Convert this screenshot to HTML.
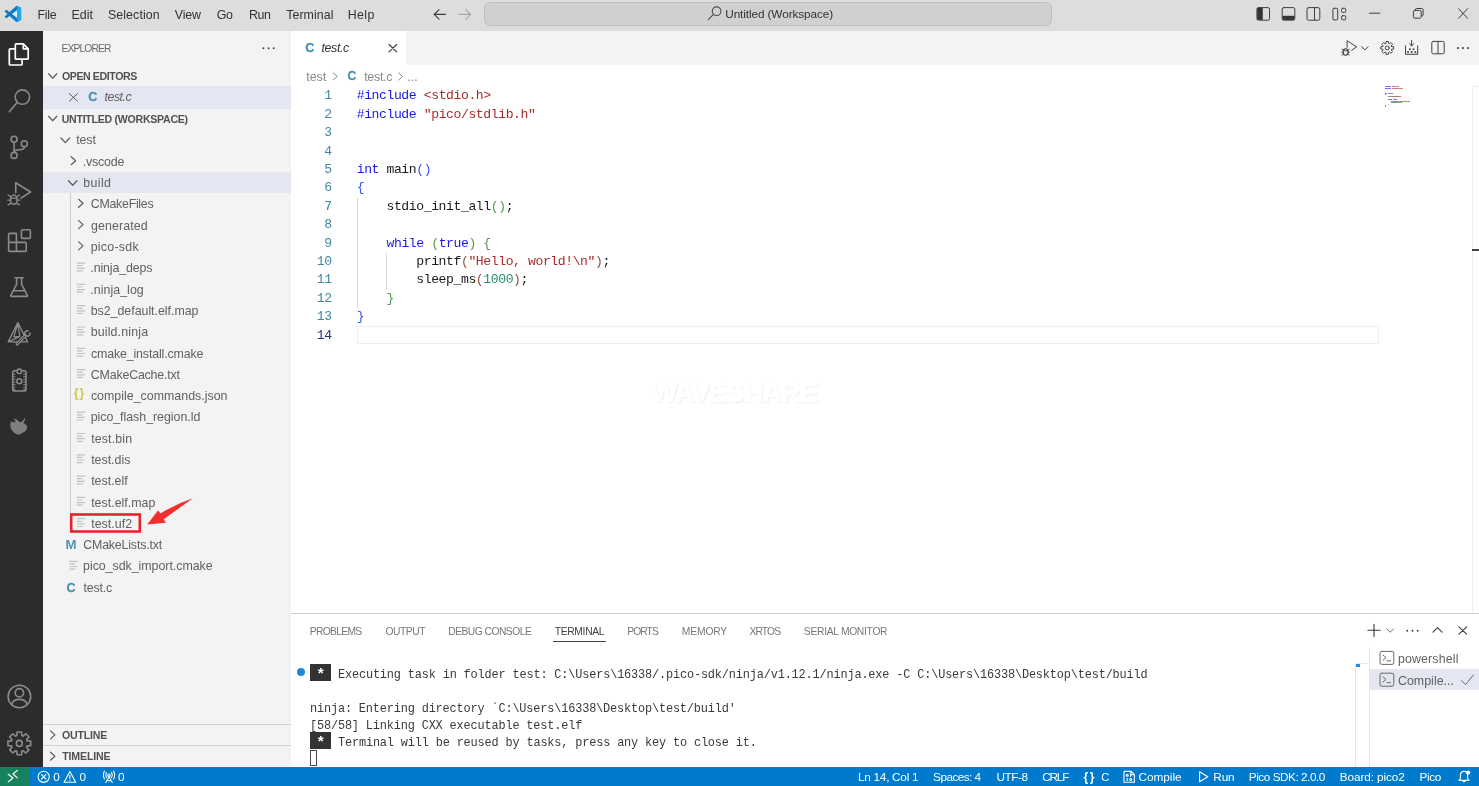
<!DOCTYPE html>
<html lang="en"><head><meta charset="utf-8"><title>Untitled (Workspace) - Visual Studio Code</title>
<style>
*{box-sizing:border-box}
html,body{margin:0;padding:0}
body{width:1479px;height:786px;overflow:hidden;background:#fff;position:relative;font-family:'Liberation Sans',sans-serif;-webkit-font-smoothing:antialiased}
.b{position:absolute}
.t{position:absolute;white-space:pre;line-height:20px;height:20px}
#w{position:absolute;left:0;top:0;width:1479px;height:786px;will-change:transform}
.cl{position:absolute;left:356.7px;white-space:pre;font-family:'Liberation Mono',monospace;font-size:13.1px;letter-spacing:-0.41px;line-height:18.4px;height:18.4px;color:#1a1a1a}
.ln{position:absolute;left:291px;width:40.6px;text-align:right;white-space:pre;font-family:'Liberation Mono',monospace;font-size:13.1px;letter-spacing:-0.41px;line-height:18.4px;height:18.4px;color:#3f889f}
.tl{position:absolute;left:310px;white-space:pre;font-family:'Liberation Mono',monospace;font-size:11.9px;letter-spacing:-0.157px;line-height:17px;height:17px;color:#3a3a3a}
.k{color:#1818ee}.s{color:#a82a2a}.n{color:#23926a}.b1{color:#3357f0}.b2{color:#4f9d4f}.b3{color:#8c553a}
svg{position:absolute;overflow:visible}
</style></head>
<body>
<div id="w">
<div class="b" style="left:0;top:0;width:1479px;height:31px;background:#dddddd"></div>
<div class="b" style="left:484.1px;top:2px;width:567.5px;height:23.5px;background:#d0d0d0;border:1px solid #bfbfbf;border-radius:6px"></div>
<div class="b" style="left:42px;top:31px;width:249px;height:736px;background:#f3f3f3"></div>
<div class="b" style="left:0;top:31px;width:42.6px;height:736px;background:#2c2c2c"></div>
<div class="b" style="left:291px;top:31px;width:1188px;height:34px;background:#f3f3f3"></div>
<div class="b" style="left:291px;top:31px;width:115.3px;height:34px;background:#ffffff"></div>
<div class="b" style="left:43px;top:86.3px;width:248px;height:22.3px;background:#e4e6f1"></div>
<div class="b" style="left:43px;top:171.7px;width:248px;height:21.2px;background:#e4e6f1"></div>
<div class="b" style="left:69.6px;top:193px;width:1px;height:320px;background:#cacaca"></div>
<div class="b" style="left:43px;top:724px;width:248px;height:1px;background:#d2d2d2"></div>
<div class="b" style="left:43px;top:745.2px;width:248px;height:1px;background:#d2d2d2"></div>
<div class="b" style="left:357px;top:326.2px;width:1022px;height:17.4px;border:1px solid #eeeeee"></div>
<div class="b" style="left:357px;top:197.7px;width:1px;height:110.4px;background:#d8d8d8"></div>
<div class="b" style="left:386.4px;top:252.9px;width:1px;height:36.8px;background:#d8d8d8"></div>
<div class="b" style="left:1472px;top:86px;width:7px;height:527px;border-left:1px solid #ececec;border-top:1px solid #ececec"></div>
<div class="b" style="left:1472px;top:249.3px;width:7px;height:1.6px;background:#444"></div>
<div class="b" style="left:291px;top:613px;width:1188px;height:1px;background:#cfcfcf"></div>
<div class="b" style="left:553.3px;top:641.3px;width:52.6px;height:1px;background:#424242"></div>
<div class="b" style="left:1369.3px;top:647px;width:1px;height:120px;background:#e5e5e5"></div>
<div class="b" style="left:1355.4px;top:663.4px;width:14px;height:104px;border-left:1px solid #e8e8e8;border-top:1px solid #e8e8e8"></div>
<div class="b" style="left:1356px;top:664px;width:4px;height:2.6px;background:#2a8ad6"></div>
<div class="b" style="left:1370px;top:669.2px;width:109px;height:20.5px;background:#e4e6f1"></div>
<div class="b" style="left:297.4px;top:667.9px;width:8px;height:8px;border-radius:50%;background:#1e8ad6"></div>
<div class="b" style="left:310px;top:749.6px;width:7px;height:16.6px;border:1px solid #4a4a4a"></div>
<div class="b" style="left:0;top:767px;width:1479px;height:19px;background:#007acc"></div>
<div class="b" style="left:0;top:767px;width:29.8px;height:19px;background:#16825d"></div>
<div class="b" style="left:651.3px;top:375.2px;font-size:27.6px;font-weight:700;line-height:36px;color:#ffffff;letter-spacing:-1.1px;-webkit-text-stroke:0.7px #fff;text-shadow:1px 1px 1.5px rgba(0,0,0,0.09)">WAVESHARE</div>
<div class="ln" style="top:87.30px">1</div>
<div class="cl" style="top:87.30px"><span class="k">#include</span> <span class="s">&lt;stdio.h&gt;</span></div>
<div class="ln" style="top:105.70px">2</div>
<div class="cl" style="top:105.70px"><span class="k">#include</span> <span class="s">"pico/stdlib.h"</span></div>
<div class="ln" style="top:124.10px">3</div>
<div class="ln" style="top:142.50px">4</div>
<div class="ln" style="top:160.90px">5</div>
<div class="cl" style="top:160.90px"><span class="k">int</span> main<span class="b1">()</span></div>
<div class="ln" style="top:179.30px">6</div>
<div class="cl" style="top:179.30px"><span class="b1">{</span></div>
<div class="ln" style="top:197.70px">7</div>
<div class="cl" style="top:197.70px">    stdio_init_all<span class="b2">()</span>;</div>
<div class="ln" style="top:216.10px">8</div>
<div class="ln" style="top:234.50px">9</div>
<div class="cl" style="top:234.50px">    <span class="k">while</span> <span class="b2">(</span><span class="k">true</span><span class="b2">)</span> <span class="b2">{</span></div>
<div class="ln" style="top:252.90px">10</div>
<div class="cl" style="top:252.90px">        printf<span class="b3">(</span><span class="s">"Hello, world!\n"</span><span class="b3">)</span>;</div>
<div class="ln" style="top:271.30px">11</div>
<div class="cl" style="top:271.30px">        sleep_ms<span class="b3">(</span><span class="n">1000</span><span class="b3">)</span>;</div>
<div class="ln" style="top:289.70px">12</div>
<div class="cl" style="top:289.70px">    <span class="b2">}</span></div>
<div class="ln" style="top:308.10px">13</div>
<div class="cl" style="top:308.10px"><span class="b1">}</span></div>
<div class="ln" style="top:326.50px;color:#22357c">14</div>
<div class="tl" style="top:666.70px;left:338.0px">Executing task in folder test: C:\Users\16338/.pico-sdk/ninja/v1.12.1/ninja.exe -C C:\Users\16338\Desktop\test/build </div>
<div class="tl" style="top:700.80px;left:310.0px">ninja: Entering directory `C:\Users\16338\Desktop\test/build&#x27;</div>
<div class="tl" style="top:717.85px;left:310.0px">[58/58] Linking CXX executable test.elf</div>
<div class="tl" style="top:734.90px;left:338.0px">Terminal will be reused by tasks, press any key to close it. </div>
<div class="b" style="left:310px;top:664.00px;width:21px;height:17px;background:#333"></div>
<div class="tl" style="top:666.60px;left:316.3px;color:#fff;font-weight:700;font-size:15px">*</div>
<div class="b" style="left:310px;top:732.00px;width:21px;height:17px;background:#333"></div>
<div class="tl" style="top:734.60px;left:316.3px;color:#fff;font-weight:700;font-size:15px">*</div>
<div class="b" style="left:1385.00px;top:86.20px;width:6.08px;height:1.3px;background:#0000ff;opacity:.55"></div>
<div class="b" style="left:1391.84px;top:86.20px;width:6.84px;height:1.3px;background:#a31515;opacity:.55"></div>
<div class="b" style="left:1385.00px;top:87.80px;width:6.08px;height:1.3px;background:#0000ff;opacity:.55"></div>
<div class="b" style="left:1391.84px;top:87.80px;width:11.40px;height:1.3px;background:#a31515;opacity:.55"></div>
<div class="b" style="left:1385.00px;top:92.60px;width:2.28px;height:1.3px;background:#0000ff;opacity:.55"></div>
<div class="b" style="left:1388.04px;top:92.60px;width:4.56px;height:1.3px;background:#333;opacity:.55"></div>
<div class="b" style="left:1385.00px;top:94.20px;width:0.76px;height:1.3px;background:#0431fa;opacity:.55"></div>
<div class="b" style="left:1388.04px;top:95.80px;width:12.92px;height:1.3px;background:#333;opacity:.55"></div>
<div class="b" style="left:1388.04px;top:99.00px;width:3.80px;height:1.3px;background:#0000ff;opacity:.55"></div>
<div class="b" style="left:1392.60px;top:99.00px;width:4.56px;height:1.3px;background:#0000ff;opacity:.55"></div>
<div class="b" style="left:1391.08px;top:100.60px;width:5.32px;height:1.3px;background:#333;opacity:.55"></div>
<div class="b" style="left:1396.40px;top:100.60px;width:12.16px;height:1.3px;background:#a31515;opacity:.55"></div>
<div class="b" style="left:1408.56px;top:100.60px;width:1.52px;height:1.3px;background:#333;opacity:.55"></div>
<div class="b" style="left:1391.08px;top:102.20px;width:6.84px;height:1.3px;background:#333;opacity:.55"></div>
<div class="b" style="left:1397.92px;top:102.20px;width:3.04px;height:1.3px;background:#098658;opacity:.55"></div>
<div class="b" style="left:1400.96px;top:102.20px;width:1.52px;height:1.3px;background:#333;opacity:.55"></div>
<div class="b" style="left:1388.04px;top:103.80px;width:0.76px;height:1.3px;background:#319331;opacity:.55"></div>
<div class="b" style="left:1385.00px;top:105.40px;width:0.76px;height:1.3px;background:#0431fa;opacity:.55"></div>
<span class="t" style="left:305.2px;top:38.1px;font-size:12.6px;font-weight:700;color:#4a91b2;-webkit-text-stroke:0.3px #4a91b2">C</span>
<span class="t" style="left:347.5px;top:66.3px;font-size:12.2px;font-weight:700;color:#4a91b2;-webkit-text-stroke:0.3px #4a91b2">C</span>
<span class="t" style="left:88.2px;top:86.8px;font-size:12.6px;font-weight:700;color:#4a91b2;-webkit-text-stroke:0.3px #4a91b2">C</span>
<span class="t" style="left:66.6px;top:577.6px;font-size:12.6px;font-weight:700;color:#4a91b2;-webkit-text-stroke:0.3px #4a91b2">C</span>
<span class="t" style="left:65.4px;top:534.6px;font-size:13.2px;font-weight:700;color:#4c93b5">M</span>
<span class="t" style="left:73.7px;top:383.4px;font-size:12.4px;font-weight:700;color:#c9c948;letter-spacing:0.9px">{}</span>
<span class="t" style="left:37.52px;top:5.00px;font-size:12.4px;color:#333333;letter-spacing:-0.248px;">File</span>
<span class="t" style="left:71.62px;top:5.00px;font-size:12.4px;color:#333333;letter-spacing:-0.032px;">Edit</span>
<span class="t" style="left:107.92px;top:5.00px;font-size:12.4px;color:#333333;letter-spacing:0.096px;">Selection</span>
<span class="t" style="left:174.86px;top:5.00px;font-size:12.4px;color:#333333;letter-spacing:-0.153px;">View</span>
<span class="t" style="left:216.63px;top:5.00px;font-size:12.4px;color:#333333;letter-spacing:-0.145px;">Go</span>
<span class="t" style="left:249.12px;top:5.00px;font-size:12.4px;color:#333333;letter-spacing:-0.475px;">Run</span>
<span class="t" style="left:286.23px;top:5.00px;font-size:12.4px;color:#333333;letter-spacing:0.055px;">Terminal</span>
<span class="t" style="left:347.72px;top:5.00px;font-size:12.4px;color:#333333;letter-spacing:0.383px;">Help</span>
<span class="t" style="left:725.22px;top:4.00px;font-size:11.8px;color:#333333;letter-spacing:-0.105px;">Untitled (Workspace)</span>
<span class="t" style="left:61.56px;top:39.00px;font-size:10.3px;color:#6a6a6a;letter-spacing:-0.892px;">EXPLORER</span>
<span class="t" style="left:61.94px;top:66.00px;font-size:10.6px;color:#515151;letter-spacing:-0.41px;font-weight:700;">OPEN EDITORS</span>
<span class="t" style="left:104.47px;top:87.00px;font-size:12.4px;color:#616161;letter-spacing:-0.462px;font-style:italic;">test.c</span>
<span class="t" style="left:61.74px;top:109.00px;font-size:10.6px;color:#515151;letter-spacing:-0.275px;font-weight:700;">UNTITLED (WORKSPACE)</span>
<span class="t" style="left:76.16px;top:130.00px;font-size:12.4px;color:#616161;letter-spacing:-0.07px;">test</span>
<span class="t" style="left:82.76px;top:152.00px;font-size:12.4px;color:#616161;letter-spacing:-0.172px;">.vscode</span>
<span class="t" style="left:83.26px;top:173.00px;font-size:12.4px;color:#616161;letter-spacing:0.376px;">build</span>
<span class="t" style="left:90.83px;top:194.00px;font-size:12.4px;color:#616161;letter-spacing:-0.29px;">CMakeFiles</span>
<span class="t" style="left:90.94px;top:216.00px;font-size:12.4px;color:#616161;letter-spacing:0.124px;">generated</span>
<span class="t" style="left:90.66px;top:237.00px;font-size:12.4px;color:#616161;letter-spacing:0.264px;">pico-sdk</span>
<span class="t" style="left:90.36px;top:258.00px;font-size:12.4px;color:#616161;letter-spacing:-0.134px;">.ninja_deps</span>
<span class="t" style="left:90.36px;top:280.00px;font-size:12.4px;color:#616161;letter-spacing:0.035px;">.ninja_log</span>
<span class="t" style="left:90.66px;top:301.00px;font-size:12.4px;color:#616161;letter-spacing:-0.017px;">bs2_default.elf.map</span>
<span class="t" style="left:90.66px;top:322.00px;font-size:12.4px;color:#616161;letter-spacing:0.156px;">build.ninja</span>
<span class="t" style="left:90.91px;top:344.00px;font-size:12.4px;color:#616161;letter-spacing:-0.135px;">cmake_install.cmake</span>
<span class="t" style="left:90.83px;top:365.00px;font-size:12.4px;color:#616161;letter-spacing:-0.19px;">CMakeCache.txt</span>
<span class="t" style="left:90.91px;top:386.00px;font-size:12.4px;color:#616161;letter-spacing:0.009px;">compile_commands.json</span>
<span class="t" style="left:90.66px;top:407.00px;font-size:12.4px;color:#616161;letter-spacing:-0.031px;">pico_flash_region.ld</span>
<span class="t" style="left:91.16px;top:429.00px;font-size:12.4px;color:#616161;letter-spacing:0.132px;">test.bin</span>
<span class="t" style="left:91.16px;top:450.00px;font-size:12.4px;color:#616161;letter-spacing:-0.009px;">test.dis</span>
<span class="t" style="left:91.16px;top:471.00px;font-size:12.4px;color:#616161;letter-spacing:0.009px;">test.elf</span>
<span class="t" style="left:91.16px;top:493.00px;font-size:12.4px;color:#616161;letter-spacing:0.019px;">test.elf.map</span>
<span class="t" style="left:91.16px;top:514.00px;font-size:12.4px;color:#616161;letter-spacing:0.059px;">test.uf2</span>
<span class="t" style="left:83.23px;top:535.00px;font-size:12.4px;color:#616161;letter-spacing:-0.177px;">CMakeLists.txt</span>
<span class="t" style="left:83.07px;top:556.00px;font-size:12.4px;color:#616161;letter-spacing:-0.028px;">pico_sdk_import.cmake</span>
<span class="t" style="left:83.56px;top:578.00px;font-size:12.4px;color:#616161;letter-spacing:-0.187px;">test.c</span>
<span class="t" style="left:61.94px;top:725.00px;font-size:10.6px;color:#515151;letter-spacing:-0.202px;font-weight:700;">OUTLINE</span>
<span class="t" style="left:62.29px;top:746.00px;font-size:10.6px;color:#515151;letter-spacing:-0.171px;font-weight:700;">TIMELINE</span>
<span class="t" style="left:321.57px;top:38.00px;font-size:12.4px;color:#333333;letter-spacing:-0.402px;font-style:italic;">test.c</span>
<span class="t" style="left:306.16px;top:67.00px;font-size:12.4px;color:#8a8a8a;letter-spacing:0.063px;">test</span>
<span class="t" style="left:364.16px;top:67.00px;font-size:12.4px;color:#8a8a8a;letter-spacing:-0.247px;">test.c</span>
<span class="t" style="left:407.26px;top:67.00px;font-size:12.4px;color:#8a8a8a;letter-spacing:0.01px;">...</span>
<span class="t" style="left:309.86px;top:622.00px;font-size:10.3px;color:#777;letter-spacing:-0.71px;">PROBLEMS</span>
<span class="t" style="left:385.4px;top:622.00px;font-size:10.3px;color:#777;letter-spacing:-0.443px;">OUTPUT</span>
<span class="t" style="left:448.26px;top:622.00px;font-size:10.3px;color:#777;letter-spacing:-0.527px;">DEBUG CONSOLE</span>
<span class="t" style="left:554.68px;top:622.00px;font-size:10.3px;color:#424242;letter-spacing:-0.305px;">TERMINAL</span>
<span class="t" style="left:627.26px;top:622.00px;font-size:10.3px;color:#777;letter-spacing:-0.923px;">PORTS</span>
<span class="t" style="left:681.86px;top:622.00px;font-size:10.3px;color:#777;letter-spacing:-0.169px;">MEMORY</span>
<span class="t" style="left:749.5px;top:622.00px;font-size:10.3px;color:#777;letter-spacing:-0.88px;">XRTOS</span>
<span class="t" style="left:803.86px;top:622.00px;font-size:10.3px;color:#777;letter-spacing:-0.298px;">SERIAL MONITOR</span>
<span class="t" style="left:1397.96px;top:649.00px;font-size:12.4px;color:#616161;letter-spacing:0.134px;">powershell</span>
<span class="t" style="left:1397.93px;top:671.00px;font-size:12.4px;color:#616161;letter-spacing:0.031px;">Compile...</span>
<span class="t" style="left:53.3px;top:767.00px;font-size:11.8px;color:#ffffff;letter-spacing:0px;">0</span>
<span class="t" style="left:79.4px;top:767.00px;font-size:11.8px;color:#ffffff;letter-spacing:0px;">0</span>
<span class="t" style="left:117.9px;top:767.00px;font-size:11.8px;color:#ffffff;letter-spacing:0px;">0</span>
<span class="t" style="left:858.05px;top:767.00px;font-size:11.8px;color:#ffffff;letter-spacing:-0.286px;">Ln 14, Col 1</span>
<span class="t" style="left:933.09px;top:767.00px;font-size:11.8px;color:#ffffff;letter-spacing:-0.552px;">Spaces: 4</span>
<span class="t" style="left:996.42px;top:767.00px;font-size:11.8px;color:#ffffff;letter-spacing:-0.441px;">UTF-8</span>
<span class="t" style="left:1042.23px;top:767.00px;font-size:11.8px;color:#ffffff;letter-spacing:-1.2px;">CRLF</span>
<span class="t" style="left:1138.44px;top:767.00px;font-size:11.8px;color:#ffffff;letter-spacing:-0.019px;">Compile</span>
<span class="t" style="left:1213.35px;top:767.00px;font-size:11.8px;color:#ffffff;letter-spacing:-0.223px;">Run</span>
<span class="t" style="left:1248.85px;top:767.00px;font-size:11.8px;color:#ffffff;letter-spacing:-0.485px;">Pico SDK: 2.0.0</span>
<span class="t" style="left:1339.75px;top:767.00px;font-size:11.8px;color:#ffffff;letter-spacing:-0.11px;">Board: pico2</span>
<span class="t" style="left:1419.45px;top:767.00px;font-size:11.8px;color:#ffffff;letter-spacing:-0.36px;">Pico</span>
<span class="t" style="left:1083.41px;top:767.00px;font-size:12.2px;color:#ffffff;letter-spacing:1.665px;font-weight:700;">{}</span>
<span class="t" style="left:1101.27px;top:767.00px;font-size:11.2px;color:#ffffff;letter-spacing:0px;">C</span>
<svg width="1479" height="786" viewBox="0 0 1479 786" style="left:0;top:0" fill="none" stroke-linecap="round" stroke-linejoin="round">
<g transform="translate(4.8,5.8) scale(0.68)"><path d="M23.15 2.587L18.21.21a1.494 1.494 0 0 0-1.705.29l-9.46 8.63-4.12-3.128a.999.999 0 0 0-1.276.057L.327 7.261A1 1 0 0 0 .326 8.74L3.899 12 .326 15.26a1 1 0 0 0 .001 1.479L1.65 17.94a.999.999 0 0 0 1.276.057l4.12-3.128 9.46 8.63a1.492 1.492 0 0 0 1.704.29l4.942-2.377A1.5 1.5 0 0 0 24 20.06V3.939a1.5 1.5 0 0 0-.85-1.352zm-5.146 14.861L10.826 12l7.178-5.448v10.896z" fill="#1279c4" stroke="none"/><path d="M10.9 12 L18 6.600 V17.400 Z" fill="#cfeeff" stroke="none"/><path d="M18 .3l5.1 2.3c.5.3.9.8.9 1.4v16c0 .6-.4 1.100-.9 1.400L18 23.700z" fill="#2aa3ee" stroke="none"/></g>
<g stroke="#3a3a3a" stroke-width="1.1">
<path d="M445.4,14.4 H434.2 M439,9.6 L434.2,14.4 L439,19.2"/>
</g>
<g stroke="#a6a6a6" stroke-width="1.1"><path d="M459.2,14.4 H470.6 M465.8,9.6 L470.6,14.4 L465.8,19.2"/></g>
<g stroke="#4a4a4a" stroke-width="1.1"><circle cx="716.6" cy="11.2" r="4.3"/><path d="M713.5,14.4 L708.3,19.7"/></g>
<g stroke="#3f3f3f" stroke-width="1">
<rect x="1256.9" y="7.6" width="12.6" height="12.6" rx="1.6"/><rect x="1257.2" y="7.9" width="5.6" height="12" fill="#333" stroke="none"/>
<rect x="1282.2" y="7.6" width="12.6" height="12.6" rx="1.6"/><rect x="1282.5" y="15.8" width="12" height="4.1" fill="#333" stroke="none"/>
<rect x="1307" y="7.6" width="12.8" height="12.6" rx="1.6"/><path d="M1314.5,7.8 V20"/>
<rect x="1332.9" y="8.3" width="4.8" height="11.6" rx="1"/><rect x="1341.6" y="8.3" width="4.1" height="4.100" rx="1"/><rect x="1341.6" y="15.700" width="4.1" height="4.100" rx="1"/>
<path d="M1369.4,13.2 H1379.8"/>
<rect x="1413.4" y="10.4" width="7.8" height="7.8" rx="1.5"/><path d="M1415.4,10.2 V9.8 Q1415.4,8.5 1416.8,8.5 H1421.8 Q1423.1,8.5 1423.1,9.8 V14.8 Q1423.1,16.1 1421.8,16.1 H1421.4"/>
<path d="M1458.60,8.70 L1467.60,18.30 M1467.60,8.70 L1458.60,18.30"/>
</g>
<g stroke="#ffffff" stroke-width="1.7">
<path d="M16.3,43.900 H23.300 L28.200,48.800 V58.200 Q28.200,59.200 27.200,59.200 H16.300 Q15.300,59.200 15.300,58.200 V44.900 Q15.300,43.900 16.300,43.900 Z M23.300,44.100 V48.800 H28"/>
<path d="M14.800,48.900 H10.300 Q9.300,48.900 9.300,49.900 V64 Q9.300,65 10.300,65 H21.100 Q22.100,65 22.100,64 V59.800"/>
</g>
<g stroke="#8b8b8b" stroke-width="1.6">
<circle cx="22.4" cy="97.1" r="7.200"/><path d="M17.400,102.300 L9.300,111.700"/>
<circle cx="14.1" cy="139.3" r="3"/><circle cx="24.3" cy="143.7" r="3"/><circle cx="14.1" cy="155.4" r="3"/>
<path d="M14.100,142.400 V152.400 M24.300,146.800 Q24.300,149.800 19.500,149.800 Q14.100,149.800 14.100,152.400"/>
<path d="M15.700,192.800 V182.800 L30.600,192 L21,198.100"/>
<ellipse cx="13.800" cy="199.700" rx="3.300" ry="4.600" stroke-width="1.500"/><path d="M10.800,198.100 H16.800 M10.500,196.500 L8.200,195.100 M10.300,200.100 H7.700 M10.700,203.400 L8.200,204.900 M17.100,196.500 L19.400,195.100 M17.300,200.100 H19.900 M16.900,203.400 L19.400,204.900" stroke-width="1.300"/>
<path d="M8.600,234.400 Q8.600,233.400 9.600,233.400 H16.400 V251.400 H9.600 Q8.600,251.400 8.600,250.400 Z M8.600,242.400 H25.200 Q26.200,242.400 26.200,243.400 V250.400 Q26.200,251.400 25.200,251.400 H16.400"/>
<rect x="21.400" y="229.800" width="9" height="8.600" rx="1"/>
<path d="M15,277.800 H23.200 M16.600,278 V284.400 L10.800,295.400 Q10.400,296.400 11.400,296.400 H26.800 Q27.800,296.400 27.400,295.400 L21.600,284.400 V278 M13.600,290.800 H24.600"/>
</g>
<g stroke="#8b8b8b" stroke-width="1.3">
<path d="M17.800,322.600 L8.200,341.900 H27.600 Z M17.800,323.600 L19.900,336.300 L8.800,341.600 M19.900,336.300 L13.800,336.900 L17.800,323.600"/>
<path d="M17.100,343.800 L25.200,335.700" stroke-width="3.200"/><path d="M17.300,343.600 L25.200,335.700" stroke="#2c2c2c" stroke-width="1"/><path d="M27.900,330.800 A2.700,2.700 0 1 0 30.100,333" stroke-width="1.500"/>
<rect x="12.700" y="370.800" width="13.300" height="20.200" rx="1.800" stroke-width="1.500"/><circle cx="19.300" cy="371.300" r="2.300" fill="#2c2c2c" stroke-width="1.400"/><circle cx="19.300" cy="381.300" r="2.500" stroke-width="1.500"/>
<path d="M12.800,374.2 h2.200 M23.700,374.2 h2.200 M12.800,376.8 h2.200 M23.700,376.8 h2.200 M12.800,379.4 h2.200 M23.700,379.4 h2.200 M12.800,382.0 h2.200 M23.700,382.0 h2.200 M12.800,384.6 h2.200 M23.700,384.6 h2.200 M12.800,387.2 h2.200 M23.700,387.2 h2.200 M12.800,389.4 h2.200 M23.700,389.4 h2.200" stroke-width="1"/>
</g>
<g fill="#7f7f7f" stroke="none"><path d="M10.400,423.600 Q12.400,421.400 17,422.800 Q20,421.600 22,422.400 Q27,424 27.200,427.400 Q27.200,430.400 22.600,432.800 Q19.600,435.200 18.400,434.800 Q16,434.600 13.400,432 Q10.400,429.400 10.400,426.800 Z"/><path d="M10,421 Q12.400,422.800 15.600,422.400 Q15.400,420.200 13.400,418.400 Q17.400,418.800 19,421.400 L19.400,423 L12,424 Z"/><path d="M19.800,423 Q23,421.800 25,417.600 Q25.600,420.600 23.400,423.200 Z"/></g>
<g stroke="#8b8b8b" stroke-width="1.6">
<circle cx="19.400" cy="696.500" r="11.300"/><circle cx="19.400" cy="692.800" r="4.200"/><path d="M11.600,704.600 Q13,699.400 19.400,699.400 Q25.800,699.400 27.200,704.600"/>
<path d="M27.12,740.94 L30.68,741.15 L30.68,745.65 L27.12,745.86 L26.57,747.19 L28.93,749.86 L25.76,753.03 L23.09,750.67 L21.76,751.22 L21.55,754.78 L17.05,754.78 L16.84,751.22 L15.51,750.67 L12.84,753.03 L9.67,749.86 L12.03,747.19 L11.48,745.86 L7.92,745.65 L7.92,741.15 L11.48,740.94 L12.03,739.61 L9.67,736.94 L12.84,733.77 L15.51,736.13 L16.84,735.58 L17.05,732.02 L21.55,732.02 L21.76,735.58 L23.09,736.13 L25.76,733.77 L28.93,736.94 L26.57,739.61Z"/><circle cx="19.300" cy="743.400" r="3"/>
</g>
<g fill="#424242" stroke="none"><circle cx="263.40" cy="48.20" r="0.95"/><circle cx="268.60" cy="48.20" r="0.95"/><circle cx="273.70" cy="48.20" r="0.95"/></g>
<g stroke="#5e5e5e" stroke-width="1.25">
<path d="M48.60,73.80 L52.70,78.20 L56.80,73.80"/>
<path d="M48.60,116.30 L52.70,120.70 L56.80,116.30"/>
<path d="M61.00,138.00 L65.30,142.60 L69.60,138.00"/>
<path d="M68.40,180.70 L72.70,185.30 L77.00,180.70"/>
<path d="M71.20,156.70 L75.60,160.70 L71.20,164.70"/>
<path d="M78.60,199.30 L83.00,203.30 L78.60,207.30"/>
<path d="M78.60,220.60 L83.00,224.60 L78.60,228.60"/>
<path d="M78.60,241.90 L83.00,245.90 L78.60,249.90"/>
<path d="M50.50,730.90 L54.90,734.90 L50.50,738.90"/>
<path d="M50.50,752.20 L54.90,756.20 L50.50,760.20"/>
<path d="M69.40,93.70 L77.40,101.10 M77.40,93.70 L69.40,101.10" stroke="#5a5a5a" stroke-width="1"/>
</g>
<g stroke="#c2c2c2" stroke-width="1.2" stroke-linecap="butt">
<path d="M76.80,263.10 h8.40 M76.80,265.70 h5.80 M76.80,268.30 h8.00 M76.80,270.90 h6.20"/>
<path d="M76.80,284.40 h8.40 M76.80,287.00 h5.80 M76.80,289.60 h8.00 M76.80,292.20 h6.20"/>
<path d="M76.80,305.70 h8.40 M76.80,308.30 h5.80 M76.80,310.90 h8.00 M76.80,313.50 h6.20"/>
<path d="M76.80,327.00 h8.40 M76.80,329.60 h5.80 M76.80,332.20 h8.00 M76.80,334.80 h6.20"/>
<path d="M76.80,348.30 h8.40 M76.80,350.90 h5.80 M76.80,353.50 h8.00 M76.80,356.10 h6.20"/>
<path d="M76.80,369.60 h8.40 M76.80,372.20 h5.80 M76.80,374.80 h8.00 M76.80,377.40 h6.20"/>
<path d="M76.80,412.20 h8.40 M76.80,414.80 h5.80 M76.80,417.40 h8.00 M76.80,420.00 h6.20"/>
<path d="M76.80,433.50 h8.40 M76.80,436.10 h5.80 M76.80,438.70 h8.00 M76.80,441.30 h6.20"/>
<path d="M76.80,454.80 h8.40 M76.80,457.40 h5.80 M76.80,460.00 h8.00 M76.80,462.60 h6.20"/>
<path d="M76.80,476.10 h8.40 M76.80,478.70 h5.80 M76.80,481.30 h8.00 M76.80,483.90 h6.20"/>
<path d="M76.80,497.40 h8.40 M76.80,500.00 h5.80 M76.80,502.60 h8.00 M76.80,505.20 h6.20"/>
<path d="M76.80,518.70 h8.40 M76.80,521.30 h5.80 M76.80,523.90 h8.00 M76.80,526.50 h6.20"/>
<path d="M69.20,561.30 h8.40 M69.20,563.90 h5.80 M69.20,566.50 h8.00 M69.20,569.10 h6.20"/>
</g>
<rect x="71.2" y="514.5" width="68.6" height="17" stroke="#e3262b" stroke-width="2.6" stroke-linejoin="miter"/>
<path d="M147.200,524.500 L158,510.600 L160.600,513.400 Q176,503.800 193,498.300 Q178.600,508.400 163.800,519.300 L165.800,522.800 Z" fill="#f42e2e" stroke="none"/>
<g stroke="#3a3a3a" stroke-width="1.1">
<path d="M389.10,44.50 L396.70,51.90 M396.70,44.50 L389.10,51.90"/>
</g>
<g stroke="#8a8a8a" stroke-width="1">
<path d="M333.20,72.80 L337.20,76.40 L333.20,80.00"/>
<path d="M398.60,72.80 L402.60,76.40 L398.60,80.00"/>
</g>
<g stroke="#424242" stroke-width="1">
<path d="M1347.100,47.400 V40.700 L1356.600,46.900 L1351.600,50.300"/>
<ellipse cx="1345.600" cy="52" rx="2.500" ry="3.300" stroke-width="1.100"/><path d="M1343.300,50.800 H1347.900 M1343.100,49.900 L1342,49.200 M1343,52.200 H1341.600 M1343.300,54.300 L1342,55.100 M1348.100,49.900 L1349.200,49.200 M1348.200,52.200 H1349.600 M1347.900,54.300 L1349.200,55.100" stroke-width="0.900"/>
<path d="M1361.80,46.70 L1364.90,49.90 L1368.00,46.70"/>
<path d="M1391.60,46.56 L1393.58,46.68 L1393.58,49.12 L1391.60,49.24 L1391.26,50.07 L1392.58,51.55 L1390.85,53.28 L1389.37,51.96 L1388.54,52.30 L1388.42,54.28 L1385.98,54.28 L1385.86,52.30 L1385.03,51.96 L1383.55,53.28 L1381.82,51.55 L1383.14,50.07 L1382.80,49.24 L1380.82,49.12 L1380.82,46.68 L1382.80,46.56 L1383.14,45.73 L1381.82,44.25 L1383.55,42.52 L1385.03,43.84 L1385.86,43.50 L1385.98,41.52 L1388.42,41.52 L1388.54,43.50 L1389.37,43.84 L1390.85,42.52 L1392.58,44.25 L1391.26,45.73Z"/><circle cx="1387.200" cy="47.900" r="2"/>
<path d="M1405.500,45.900 V54.300 H1417.700 V45.900 M1411.600,40.500 V45.800 M1409.500,43.700 L1411.600,46 L1413.700,43.700"/>
<rect x="1431.800" y="41.400" width="12.400" height="12.400" rx="1.500"/><path d="M1438,41.600 V53.600"/>
</g>
<g fill="#424242" stroke="none"><circle cx="1457.90" cy="48.10" r="1.05"/><circle cx="1462.90" cy="48.10" r="1.05"/><circle cx="1467.90" cy="48.10" r="1.05"/><circle cx="1409.90" cy="49.20" r="1.00"/><circle cx="1413.50" cy="49.20" r="1.00"/><circle cx="1408.00" cy="52.10" r="1.00"/><circle cx="1411.70" cy="52.10" r="1.00"/><circle cx="1415.40" cy="52.10" r="1.00"/></g>
<g stroke="#3a3a3a" stroke-width="1.1">
<path d="M1374,624.200 V636.400 M1367.900,630.300 H1380.100"/>
<path d="M1433,632.200 L1437.500,627.600 L1442,632.200"/>
<path d="M1458.90,626.80 L1466.70,634.20 M1466.70,626.80 L1458.90,634.20"/>
</g>
<g stroke="#6a6a6a" stroke-width="1"><path d="M1386.80,628.90 L1390.20,632.30 L1393.60,628.90"/>
<path d="M1461.600,680.600 L1465.500,684.600 L1473.400,675"/>
<rect x="1380" y="651.40" width="13.800" height="13" rx="1.800"/><path d="M1383,655.00 L1386,657.60 L1383,660.20 M1387,660.80 H1390.500"/>
<rect x="1380" y="673.20" width="13.800" height="13" rx="1.800"/><path d="M1383,676.80 L1386,679.40 L1383,682.00 M1387,682.60 H1390.500"/>
</g>
<g fill="#424242" stroke="none"><circle cx="1407.20" cy="630.80" r="0.95"/><circle cx="1412.50" cy="630.80" r="0.95"/><circle cx="1417.70" cy="630.80" r="0.95"/></g>
<g stroke="#ffffff" stroke-width="1.1">
<path d="M8.200,774.200 L13,778 L8.200,781.900 M17.400,770.300 L12.900,774 L17.400,777.900"/>
<circle cx="43.700" cy="776.800" r="5.600"/><path d="M41.50,774.60 L45.90,779.00 M45.90,774.60 L41.50,779.00"/>
<path d="M69.900,771.400 L75.700,782.200 H64.100 Z M69.900,775.200 V778.600 M69.900,780.200 V780.400"/>
<path d="M109,776.400 L105.800,782.600 M109,776.400 L112.200,782.600 M106.800,780.600 H111.200"/><circle cx="109" cy="775.200" r="1.200"/>
<path d="M106.400,772.400 Q105,775 106.400,777.600 M104.400,771 Q102.400,775 104.400,779 M111.600,772.400 Q113,775 111.600,777.600 M113.600,771 Q115.600,775 113.600,779"/>
<path d="M1124,771.400 H1131.200 L1134.400,774.600 V782.200 H1124 Z M1131,771.600 V774.800 H1134.200"/>
<circle cx="1127.200" cy="775.300" r="1"/><path d="M1127.200,778.200 v2.300 M1130.700,774.200 v2.300"/><circle cx="1130.700" cy="779.500" r="1"/>
<path d="M1199.600,771.800 L1207.800,776.800 L1199.600,781.800 Z"/>
<path d="M1459,780.400 H1469 L1467.600,778.200 V775.400 Q1467.600,771.400 1464,771.400 Q1460.400,771.400 1460.400,775.400 V778.200 Z M1463,781 Q1464,782.800 1465,781"/>
</g>
<circle cx="1468.200" cy="772.600" r="2.100" fill="#ffffff"/>
</svg>
</div>
</body></html>
